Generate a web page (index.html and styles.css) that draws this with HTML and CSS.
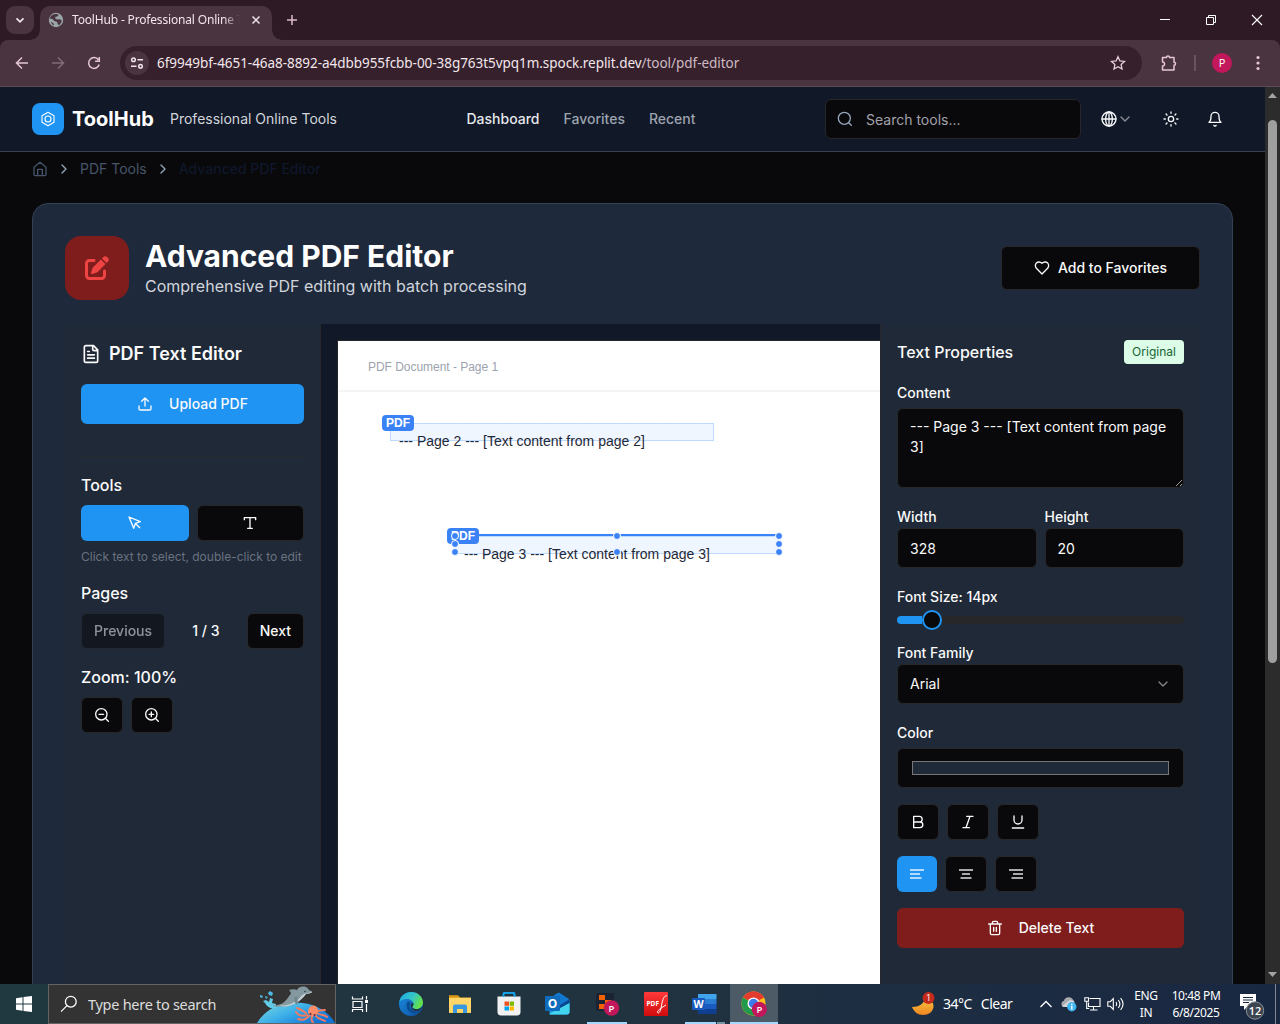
FILE: index.html
```html
<!DOCTYPE html>
<html lang="en">
<head>
<meta charset="utf-8">
<title>ToolHub - Professional Online Tools</title>
<link rel="stylesheet" href="styles.css">
</head>
<body>
<svg class="defs" width="0" height="0">
  <defs>
    <symbol id="chev" viewBox="0 0 24 24"><path d="m6 9 6 6 6-6"/></symbol>
    <symbol id="chev-r" viewBox="0 0 24 24"><path d="m9 18 6-6-6-6"/></symbol>
    <linearGradient id="edge-a" x1="0" y1="0" x2="1" y2="0.4"><stop offset="0" stop-color="#1ba7e6"/><stop offset=".6" stop-color="#35c7c4"/><stop offset="1" stop-color="#63e04b"/></linearGradient>
    <linearGradient id="edge-b" x1="0" y1="0" x2="1" y2="1"><stop offset="0" stop-color="#1b8fe0"/><stop offset="1" stop-color="#0c4da0"/></linearGradient>
    <linearGradient id="sea" x1="0" y1="0" x2="1" y2="0.6"><stop offset="0" stop-color="#7fdcd8"/><stop offset=".5" stop-color="#3fb2ea"/><stop offset="1" stop-color="#1173d6"/></linearGradient>
    <linearGradient id="moon" x1="0" y1="0" x2="0" y2="1"><stop offset="0" stop-color="#f8c840"/><stop offset="1" stop-color="#ef8420"/></linearGradient>
    <linearGradient id="pdfred" x1="0" y1="0" x2="0" y2="1"><stop offset="0" stop-color="#ff3a3a"/><stop offset="1" stop-color="#cf0b0b"/></linearGradient>
  </defs>
</svg>
<div class="screen">
  <div class="tabstrip">
    <div class="tab-search"><svg width="12" height="12" viewBox="0 0 12 12"><path d="M2.500 4.300 6 7.800l3.500-3.500" fill="none" stroke="#f1e4ea" stroke-width="1.700"/></svg></div>
    <div class="tab">
      <svg width="16" height="16" viewBox="0 0 16 16"><circle cx="8" cy="8" r="7.200" fill="#9aa5a8"/><path d="M6.300 2.200c1.700-.6 3.600-.2 4.300.6l-1.200 1.600-1.900.3-.4 1.900 2.200.9 2.800-.3 1.600 1.400c-.2 2-1.200 3.600-2.600 4.600l-1.500-1.300-.4-2-2.900-.9L4.400 7 1.700 6.600C2.300 4.400 4 2.700 6.300 2.200zM3 10l2.300 1.100.8 2.300C4.600 12.900 3.600 11.700 3 10z" fill="#4a3440"/></svg>
      <span class="tab-title">ToolHub - Professional Online Tools</span>
      <svg width="10" height="10" viewBox="0 0 10 10"><path d="m1.500 1.500 7 7m0-7-7 7" stroke="#f1e4ea" stroke-width="1.500"/></svg>
    </div>
    <svg class="new-tab" width="12" height="12" viewBox="0 0 12 12"><path d="M6 1v10M1 6h10" stroke="#dcbccb" stroke-width="1.500"/></svg>
    <div class="win-controls">
      <svg width="46" height="40" viewBox="0 0 46 40"><path d="M18 19.500h10" stroke="#fff"/></svg>
      <svg width="46" height="40" viewBox="0 0 46 40"><path d="M18.500 17.500h7v7h-7zM20.500 17.500v-2h7v7h-2" fill="none" stroke="#fff"/></svg>
      <svg width="46" height="40" viewBox="0 0 46 40"><path d="m18 15 10 10m0-10-10 10" stroke="#fff" stroke-width="1.100"/></svg>
    </div>
  </div>
  <div class="toolbar">
    <svg class="nav" width="14" height="14" viewBox="0 0 14 14"><path d="M13 7H2M7 1.500 1.500 7 7 12.500" fill="none" stroke="#e6c6d4" stroke-width="1.500"/></svg>
    <svg class="nav" width="14" height="14" viewBox="0 0 14 14"><path d="M1 7h11M7 1.500 12.500 7 7 12.500" fill="none" stroke="#836b77" stroke-width="1.500"/></svg>
    <svg class="nav" width="14" height="14" viewBox="0 0 14 14"><path d="M12.200 8.500a5.400 5.400 0 1 1-.8-4.700M12.300 1v4.200H8.100" fill="none" stroke="#e6c6d4" stroke-width="1.500"/></svg>
    <div class="omnibox">
      <div class="site-info"><svg width="14" height="14" viewBox="0 0 14 14" fill="none" stroke="#f1e4ea" stroke-width="1.500"><circle cx="3.500" cy="3.800" r="1.800"/><path d="M7.500 3.800H13M1 10.200h5.500"/><circle cx="10.500" cy="10.200" r="1.800"/></svg></div>
      <span class="url">6f9949bf-4651-46a8-8892-a4dbb955fcbb-00-38g763t5vpq1m.spock.replit.dev<span class="path">/tool/pdf-editor</span></span>
      <svg class="star" width="16" height="16" viewBox="0 0 16 16"><path d="m8 1.700 1.900 4.200 4.600.5-3.400 3.100.9 4.500L8 11.700 4 14l.9-4.500L1.500 6.400l4.600-.5z" fill="none" stroke="#e6cdd8" stroke-width="1.300"/></svg>
    </div>
    <svg class="ext" width="18" height="18" viewBox="0 0 18 18"><path d="M2.500 3.500h4a1.500 1.500 0 0 1 3 0h4.500v4.700a1.500 1.500 0 0 1 0 3.100v4.700H2.500v-4a2 2 0 0 0 0-4z" fill="none" stroke="#e6c6d4" stroke-width="1.500" stroke-linejoin="round"/></svg>
    <div class="tb-sep"></div>
    <div class="avatar">P</div>
    <svg class="dots" width="4" height="16" viewBox="0 0 4 16" fill="#e6c6d4"><circle cx="2" cy="2.500" r="1.600"/><circle cx="2" cy="8" r="1.600"/><circle cx="2" cy="13.500" r="1.600"/></svg>
  </div>

  <div class="viewport">
    <div class="page">
      <header class="site-header">
        <div class="logo"><svg width="16" height="16" viewBox="0 0 16 16" fill="none" stroke="#fff" stroke-width="1.100"><path d="M8 1.300 14 4.700v6.600l-6 3.400-6-3.400V4.700z" stroke-linejoin="round"/><circle cx="8" cy="8" r="3"/></svg></div>
        <span class="brand">ToolHub</span>
        <span class="tagline">Professional Online Tools</span>
        <nav><a class="on">Dashboard</a><a>Favorites</a><a>Recent</a></nav>
        <div class="search"><svg class="ic" width="16" height="16" viewBox="0 0 24 24"><circle cx="11" cy="11" r="9"/><path d="m21.500 21.500-4-4"/></svg><span>Search tools...</span></div>
        <div class="lang"><svg class="ic" width="16" height="16" viewBox="0 0 24 24"><circle cx="12" cy="12" r="10.500"/><ellipse cx="12" cy="12" rx="5" ry="10.500"/><path d="M12 1.500v21M1.500 12h21"/></svg><svg class="ic dim" width="12" height="16" viewBox="3 0 18 24"><path d="m6 9 6 6 6-6"/></svg></div>
        <svg class="ic sun" width="16" height="16" viewBox="0 0 24 24"><circle cx="12" cy="12" r="4"/><path d="M12 1.500v2M12 20.500v2M4.600 4.600 6 6M18 18l1.400 1.400M1.500 12h2M20.500 12h2M6 18l-1.400 1.400M19.400 4.600 18 6"/></svg>
        <svg class="ic" width="16" height="16" viewBox="0 0 24 24"><path d="M6 8a6 6 0 0 1 12 0c0 7 3 9 3 9H3s3-2 3-9M10.300 21.500a1.940 1.940 0 0 0 3.400 0"/></svg>
      </header>
      <div class="crumbs">
        <svg class="ic home" width="16" height="16" viewBox="0 0 24 24"><path d="M3 9.500 12 2l9 7.500V20a2 2 0 0 1-2 2H5a2 2 0 0 1-2-2zM8.500 22V12.500h7V22"/></svg>
        <svg class="ic sep" width="16" height="16"><use href="#chev-r"/></svg>
        <span class="c1">PDF Tools</span>
        <svg class="ic sep" width="16" height="16"><use href="#chev-r"/></svg>
        <span class="c2">Advanced PDF Editor</span>
      </div>
      <main class="card">
        <div class="card-head">
          <div class="tool-icon"><svg width="24" height="24" viewBox="0 0 512 512" fill="#ef4444"><path d="M471.600 21.700c-21.900-21.900-57.300-21.900-79.200 0L362.300 51.700l97.900 97.900 30.100-30.100c21.900-21.900 21.900-57.300 0-79.200L471.600 21.700zm-299.200 220c-6.100 6.100-10.800 13.600-13.500 21.900l-29.600 88.800c-2.900 8.600-.6 18.100 5.800 24.600s15.900 8.700 24.600 5.800l88.800-29.600c8.200-2.700 15.700-7.400 21.900-13.500L437.700 172.300 339.700 74.300 172.400 241.700zM96 64C43 64 0 107 0 160V416c0 53 43 96 96 96H352c53 0 96-43 96-96V320c0-17.700-14.300-32-32-32s-32 14.300-32 32v96c0 17.700-14.300 32-32 32H96c-17.700 0-32-14.300-32-32V160c0-17.700 14.300-32 32-32h96c17.700 0 32-14.300 32-32s-14.300-32-32-32H96z"/></svg></div>
          <div class="titles"><h1>Advanced PDF Editor</h1><p>Comprehensive PDF editing with batch processing</p></div>
          <div class="btn fav"><svg class="ic" width="16" height="16" viewBox="0 0 24 24"><path d="M19 14c1.500-1.500 3-3.200 3-5.500A5.500 5.500 0 0 0 16.500 3c-1.800 0-3 .5-4.500 2-1.500-1.500-2.700-2-4.500-2A5.500 5.500 0 0 0 2 8.500c0 2.300 1.500 4 3 5.500l7 7z"/></svg>Add to Favorites</div>
        </div>
        <div class="editor">
          <aside class="left">
            <h2><svg class="ic" width="20" height="20" viewBox="0 0 24 24"><path d="M15 2H6a2 2 0 0 0-2 2v16a2 2 0 0 0 2 2h12a2 2 0 0 0 2-2V7zM14 2v4a2 2 0 0 0 2 2h4M10 9H8M16 13H8M16 17H8"/></svg>PDF Text Editor</h2>
            <div class="btn primary upload"><svg class="ic" width="16" height="16" viewBox="0 0 24 24"><path d="M21 15v4a2 2 0 0 1-2 2H5a2 2 0 0 1-2-2v-4M17 8l-5-5-5 5M12 3v12"/></svg>Upload PDF</div>
            <div class="rule"></div>
            <h3>Tools</h3>
            <div class="two">
              <div class="btn primary"><svg class="ic" width="16" height="16" viewBox="0 0 24 24"><path d="m3 3 7.070 16.970 2.510-7.390 7.390-2.510zM13 13l6 6"/></svg></div>
              <div class="btn"><svg class="ic" width="16" height="16" viewBox="0 0 24 24"><path d="M3.500 7V4h17v3M8.500 20h7M12 4v16"/></svg></div>
            </div>
            <p class="hint">Click text to select, double-click to edit</p>
            <h3>Pages</h3>
            <div class="pager"><div class="btn off">Previous</div><span>1 / 3</span><div class="btn">Next</div></div>
            <h3>Zoom: 100%</h3>
            <div class="icons">
              <div class="btn sq"><svg class="ic" width="16" height="16" viewBox="0 0 24 24"><circle cx="11" cy="11" r="8.500"/><path d="m21.500 21.500-4.500-4.500M7.500 11h7"/></svg></div>
              <div class="btn sq"><svg class="ic" width="16" height="16" viewBox="0 0 24 24"><circle cx="11" cy="11" r="8.500"/><path d="m21.500 21.500-4.500-4.500M7.500 11h7M11 7.500v7"/></svg></div>
            </div>
          </aside>
          <section class="stage">
            <div class="sheet">
              <div class="sheet-head">PDF Document - Page 1</div>
              <div class="item item-a"><span class="txt">--- Page 2 --- [Text content from page 2]</span><b>PDF</b></div>
              <div class="item item-b"><span class="txt">--- Page 3 --- [Text content from page 3]</span><b>PDF</b>
                <i class="l t"></i><i class="l m"></i><i class="l e"></i><i class="c t"></i><i class="c e"></i><i class="r t"></i><i class="r m"></i><i class="r e"></i>
              </div>
            </div>
          </section>
          <aside class="right">
            <div class="r-head"><h3>Text Properties</h3><span class="badge">Original</span></div>
            <label>Content</label>
            <textarea class="field area">--- Page 3 --- [Text content from page 3]</textarea>
            <div class="wh">
              <div><label>Width</label><div class="field">328</div></div>
              <div><label>Height</label><div class="field">20</div></div>
            </div>
            <label>Font Size: 14px</label>
            <div class="slider"><div class="fill"></div><div class="thumb"></div><div class="track"></div></div>
            <label>Font Family</label>
            <div class="field select">Arial<svg class="ic" width="16" height="16"><use href="#chev"/></svg></div>
            <label class="lc">Color</label>
            <div class="field color"><div></div></div>
            <div class="icons">
              <div class="btn sq"><svg class="ic" width="16" height="16" viewBox="0 0 24 24"><path d="M5.500 12H15a4 4 0 0 1 0 8.500H5.500V3.500H14a4 4 0 0 1 0 8.500"/></svg></div>
              <div class="btn sq"><svg class="ic" width="16" height="16" viewBox="0 0 24 24"><path d="M19.500 3.500H10M14 20.500H4.500M15 3.500 9 20.500"/></svg></div>
              <div class="btn sq"><svg class="ic" width="16" height="16" viewBox="0 0 24 24"><path d="M6 3v6a6 6 0 0 0 12 0V3M3.500 21h17"/></svg></div>
            </div>
            <div class="icons align">
              <div class="btn sq primary"><svg class="bars" width="16" height="16" viewBox="0 0 16 16"><path d="M1 4h14M1 8h10M1 12h11.500"/></svg></div>
              <div class="btn sq"><svg class="bars" width="16" height="16" viewBox="0 0 16 16"><path d="M1 4h14M4 8h8M2.500 12h11"/></svg></div>
              <div class="btn sq"><svg class="bars" width="16" height="16" viewBox="0 0 16 16"><path d="M1 4h14M5 8h10M3.500 12H15"/></svg></div>
            </div>
            <div class="btn danger"><svg class="ic" width="16" height="16" viewBox="0 0 24 24"><path d="M2.500 6h19M19 6v14c0 1-1 2-2 2H7c-1 0-2-1-2-2V6M8 6V4c0-1 1-2 2-2h4c1 0 2 1 2 2v2M10 11v6M14 11v6"/></svg>Delete Text</div>
          </aside>
        </div>
      </main>
    </div>
    <div class="scroll">
      <svg width="15" height="17" viewBox="0 0 15 17"><path d="M3 11h9L7.500 6z" fill="#a3a3a3"/></svg>
      <div class="thumb-v"></div>
      <svg width="15" height="17" viewBox="0 0 15 17"><path d="M3 5h9l-4.500 5z" fill="#a3a3a3"/></svg>
    </div>
  </div>

  <footer class="taskbar">
    <div class="start"><svg width="16" height="16" viewBox="0 0 16 16" fill="#fff"><path d="M0 2.200 6.500 1.300v6.200H0zM7.500 1.100 16 0v7.500H7.500zM0 8.500h6.500v6.200L0 13.800zM7.500 8.500H16V16l-8.500-1.100z"/></svg></div>
    <div class="tsearch">
      <svg width="18" height="18" viewBox="0 0 18 18" fill="none" stroke="#fff" stroke-width="1.300"><circle cx="10.800" cy="6.700" r="5.400"/><path d="M7 10.600 1 16.600"/></svg>
      <span>Type here to search</span>
      <svg class="ocean" width="78" height="38" viewBox="0 0 78 38">
        <path d="M0 38C8 25 22 17 40 17.500S71 26 78 38z" fill="url(#sea)"/>
        <path d="M19 23c-6 1-9-1-11-5l-2-2 3-1 3 2 1-4 3 1-1 4 4 1z" fill="#62cbe8"/><path d="M11 8l2-2 3 2-1 3-3-1zM3 10l3 1-1 2-2-1zM8 11l3 1-2 2z" fill="#4dbce5"/>
        <path d="M14 20c8 1 12-1 16-6 2-3 4-5 4-6l-2-3c3-1 6-1 8 0 1-2 3-3.500 6-3.500 4 0 5 2 6 3.500l3 1.500c0 2-4 2-6 2.500-5 7-14 13-23 12.500-5 0-9 1-12-2z" fill="#84989f"/>
        <path d="M22 20.500c9 .5 17-3 22-9 2-3 5-3 9-4l2-1c0 2-4 2-6 2.500-5 7-14 13-23 12.500z" fill="#c3d1d5"/><path d="M37 13c0 4 2 6 3 7 1-3 1-6 0-9z" fill="#72868e"/><circle cx="48" cy="6.500" r=".8" fill="#2f3b42"/>
        <path d="M50 30c-6 2-9 0-11-3M52 31c-5 5-8 4-11 3M55 31c-1 4 0 6 1 6M59 31c3 4 6 3 9 5M60 28c5 3 7 1 10 4M49 28c-3-2-6-4-9-5M61 26c3-1 5-1 7-1" fill="none" stroke="#f17a5f" stroke-width="2" stroke-linecap="round"/><ellipse cx="56" cy="26" rx="5" ry="5.500" fill="#fa8c69" transform="rotate(18 56 26)"/><circle cx="53.500" cy="29" r="1" fill="#5b2440"/><circle cx="57.500" cy="30" r="1" fill="#5b2440"/>
      </svg>
    </div>
    <div class="slot tv"><svg width="18" height="18" viewBox="0 0 18 18" fill="none" stroke="#fff" stroke-width="1.200"><path d="M1.500 1.500v2.500h10V1.500M2 6.500h9v6H2zM1.500 17v-2.500h10V17M15.500 1v3.500M15.500 9v8"/><path d="M14 5h3v3h-3z" fill="#fff" stroke="none"/></svg></div>
    <div class="slot"><svg width="24" height="24" viewBox="0 0 24 24"><circle cx="12" cy="12" r="12" fill="url(#edge-b)"/><path d="M.3 10C1.500 3.800 6.500 0 12 0c7 0 12 5 12 10.500 0 4-3.200 6.500-6.500 6.500-3 0-4.500-1.500-4-2.500.8-1 1.200-1.700 1-3C14 8.700 11 7 8 7 4 7 1 9 .3 10z" fill="url(#edge-a)"/><path d="M8 10.500c-2 5 2 11 8 11 3 0 5-1.500 6-3-7 3-14-2-10.500-7.500C10.500 9 9 9 8 10.500z" fill="#0b4d93"/><path d="M14.300 11c1 3-2.500 3.500-.3 5.300 3 2 8 .7 9.500-2-.8 2.200-2 3.500-3.500 4.500-5 1.500-10-3-7.500-7.600z" fill="#21353e"/></svg></div>
    <div class="slot"><svg width="22" height="20" viewBox="0 0 22 20"><path d="M0 1.500h9l2 2h11V19H0z" fill="#f4b93c"/><path d="M0 1.500h9l2 2H0z" fill="#d9940c"/><path d="M0 4h22v14.500H0z" fill="#ffd667"/><path d="M4 19v-6.500c0-1.300 1-2 2-2h10c1 0 2 .7 2 2V19h-4v-4H8v4z" fill="#3a96dd"/></svg></div>
    <div class="slot"><svg width="24" height="24" viewBox="0 0 24 24"><path d="M6.500 6V2c0-.8.500-1.200 1.200-1.200h8.600c.7 0 1.200.4 1.200 1.200v4" fill="none" stroke="#1ba4ee" stroke-width="1.700"/><path d="M.5 4.500h23V20c0 2-1.200 3.500-3.500 3.500H4C1.700 23.500.5 22 .5 20z" fill="#f1f1f1"/><path d="M7.500 9.500H12v4.300H7.500z" fill="#f25022"/><path d="M12.700 9.500h4.300v4.300h-4.300z" fill="#7fba00"/><path d="M7.500 14.500H12v4H7.500z" fill="#00a4ef"/><path d="M12.700 14.500h4.300v4h-4.300z" fill="#ffb900"/><path d="M6.500 5V2c0-.8.500-1.200 1.200-1.200h8.600c.7 0 1.200.4 1.200 1.200v3" fill="none" stroke="#1ba4ee" stroke-width="1.500"/></svg></div>
    <div class="slot"><svg width="25" height="24" viewBox="0 0 25 24"><path d="M2 8 13 1l11.500 7v12c0 1.500-1 2.500-2.500 2.500H5z" fill="#1e9ae3"/><path d="M5 6 14 .5l10 6.500-11 8z" fill="#1278cf"/><path d="m12 15 12.500-8v5L15 20z" fill="#0a448f"/><path d="M4 22 24.500 11v9c0 1.500-1 2.500-2.500 2.500H5z" fill="#42d4ef"/><rect y="4" width="15" height="15" rx="1" fill="#0f6cbd"/><text x="7.500" y="15.500" text-anchor="middle" font-family="Open Sans" font-weight="700" font-size="12" fill="#fff">O</text></svg></div>
    <div class="slot run"><svg width="26" height="24" viewBox="0 0 26 24"><rect x="2" y="1" width="18" height="18" rx="2" fill="#1c2333"/><path d="M5 3h6v5H5zM11 8h6v5h-6zM5 12h6v5H5z" fill="#f26207"/><circle cx="17.500" cy="16" r="7.700" fill="#c2185b"/><text x="17.500" y="19.500" text-anchor="middle" font-family="Open Sans" font-weight="600" font-size="9.500" fill="#fff">P</text></svg></div>
    <div class="slot"><svg width="24" height="24" viewBox="0 0 24 24"><rect width="24" height="24" rx="1" fill="url(#pdfred)"/><text x="2.500" y="14" font-family="Open Sans" font-weight="700" font-size="6.500" fill="#fff">PDF</text><path d="M23 4c-2-1-4 2-5 7-1 6-2 10-4 10-2-1 1-4 8-8" fill="none" stroke="#fff"/></svg></div>
    <div class="slot word"><svg width="25" height="22" viewBox="0 0 25 22"><path d="M6 1h18.500v5H6z" fill="#41a5ee"/><path d="M6 6h18.500v5H6z" fill="#2b7cd3"/><path d="M6 11h18.500v5H6z" fill="#185abd"/><path d="M6 16h18.500v5H6z" fill="#103f91"/><rect y="5" width="13" height="12" rx="1" fill="#185abd"/><text x="6.500" y="15" text-anchor="middle" font-family="Open Sans" font-weight="700" font-size="10.500" fill="#fff">W</text></svg></div>
    <div class="slot active"><svg width="26" height="26" viewBox="0 0 26 26"><circle cx="12.500" cy="12.500" r="12" fill="#fbc116"/><path d="M12.500 12.500 2 6.500C5 1.500 9 .5 12.500.5c5 0 8.500 2.500 10.500 6z" fill="#e33b2e"/><path d="M2 6.500C-2 14 2.500 24 12.500 24.500l5-9-5-3z" fill="#229a4b"/><circle cx="12.500" cy="12.500" r="6" fill="#fff"/><circle cx="12.500" cy="12.500" r="4.700" fill="#3b7ded"/><circle cx="18.300" cy="18.300" r="7.600" fill="#c2185b"/><text x="18.300" y="21.800" text-anchor="middle" font-family="Open Sans" font-weight="600" font-size="9.500" fill="#fff">P</text></svg></div>
    <div class="weather"><svg width="25" height="26" viewBox="0 0 25 26"><path d="M1 16c7 0 12-3 13-9 6 1 9 5 8.500 9-.7 5-5 8-10.500 8-5 0-9-3-11-8z" fill="url(#moon)"/><circle cx="17.500" cy="7" r="6" fill="#c42b1c"/><text x="17.500" y="10.300" text-anchor="middle" font-family="Open Sans" font-size="9" fill="#fff">1</text></svg><span>34°C</span><span>Clear</span></div>
    <div class="tray">
      <svg class="caret" width="12" height="8" viewBox="0 0 12 8"><path d="m.5 7 5.500-5.500L11.500 7" fill="none" stroke="#fff" stroke-width="1.300"/></svg>
      <svg width="17" height="16" viewBox="0 0 17 16"><path d="M3.500 11a3.300 3.300 0 0 1 .4-6.300 5 5 0 0 1 9.400-.5c2 .8 2 6.800-1.300 6.800z" fill="#a8aaad"/><path d="m2 10 8-6 4 1v6H4z" fill="#d2d4d6"/><circle cx="11.800" cy="10.800" r="4.700" fill="#40b5ef"/><path d="M11.800 7.700v1.200M11.800 9.800v3.700" stroke="#fff" stroke-width="1.400"/></svg>
      <svg width="17" height="16" viewBox="0 0 17 16" fill="none" stroke="#fff" stroke-width="1.100"><path d="M5.500 2.500h10.500v8H4.500v-4M9.500 10.500v3M6 14h7.500M.8 1.800h3.700v3.500H.8zM2.700 5.300v7.200h2.500"/></svg>
      <svg width="17" height="14" viewBox="0 0 17 14" fill="none" stroke="#fff" stroke-width="1.100"><path d="M.8 4.700h2.500l3-3v10.600l-3-3H.8zM9 5c.8 1.200.8 2.800 0 4M11.300 3c2 2.500 2 5.500 0 8M13.600 1.200c3 3.500 3 8 0 11.600"/></svg>
    </div>
    <div class="two-line lang2"><span>ENG</span><span>IN</span></div>
    <div class="two-line clock"><span>10:48 PM</span><span>6/8/2025</span></div>
    <svg class="notif" width="28" height="28" viewBox="0 0 28 28"><path d="M1 2h16v12H9l-4 4v-4H1z" fill="#fff"/><path d="M4 5.500h10M4 8h10M4 10.500h6" stroke="#1b2940" stroke-width="1.100"/><circle cx="16" cy="18.500" r="8.700" fill="#3b444f" stroke="#8b929b"/><text x="16" y="22.500" text-anchor="middle" font-family="Open Sans" font-weight="600" font-size="11" fill="#fff">12</text></svg>
    <div class="peek"></div>
  </footer>
</div>
</body>
</html>
```
FILE: styles.css
```css
* { box-sizing: border-box; }
body { margin: 0; background: #09090b; font-family: Inter, sans-serif; line-height: 20px; overflow: hidden; }
.defs { display: block; position: absolute; }
svg { display: block; flex: none; }
h1, h2, h3, p { margin: 0; }
.screen { width: 1280px; height: 1024px; display: grid; grid-template-rows: 40px 47px 897px 40px; background: #2e1a25; }
.ic { fill: none; stroke: currentColor; stroke-width: 2; stroke-linecap: round; stroke-linejoin: round; }

/* Browser window frame */
.tabstrip { display: flex; align-items: center; background: #2e1a25; }
.tab-search { width: 28px; height: 28px; margin-left: 6px; border-radius: 9px; background: #4a3440; display: grid; place-items: center; }
.tab { width: 232px; height: 34px; margin: 6px 0 0 6px; padding: 0 11px 6px 8px; border-radius: 10px 10px 0 0; background: #4a3440; display: flex; align-items: center; position: relative; }
.tab::before, .tab::after { content: ""; position: absolute; bottom: 0; width: 10px; height: 10px; }
.tab::before { left: -10px; background: radial-gradient(circle at 0 0, transparent 9.500px, #4a3440 10px); }
.tab::after { right: -10px; background: radial-gradient(circle at 100% 0, transparent 9.500px, #4a3440 10px); }
.tab-title { width: 168px; margin: 0 11px 0 8px; overflow: hidden; white-space: nowrap; font: 12px/16px "Noto Sans", sans-serif; letter-spacing: -0.17px; color: #f1e4ea; mask-image: linear-gradient(90deg, #000 152px, transparent 168px); }
.new-tab { margin-left: 14px; }
.win-controls { display: flex; margin-left: auto; }
.toolbar { display: flex; align-items: center; height: 47px; background: #4a3440; border-bottom: 1px solid #5b4a53; border-radius: 8px 8px 0 0; }
.nav { margin-left: 15px; margin-right: 7px; }
.nav + .nav { margin-left: 15px; }
.omnibox { width: 1022px; height: 34px; margin-left: 12px; border-radius: 17px; background: #35202b; display: flex; align-items: center; }
.site-info { width: 24px; height: 24px; margin-left: 5px; border-radius: 50%; background: #4a3440; display: grid; place-items: center; }
.url { margin-left: 8px; font: 13.500px/20px "Noto Sans", sans-serif; letter-spacing: -0.045px; color: #f3e6ec; white-space: nowrap; }
.path { color: #cfbac4; }
.star { margin: 0 16px 0 auto; }
.ext { margin-left: 18px; }
.tb-sep { width: 2px; height: 16px; margin-left: 16px; background: #6a525e; }
.avatar { width: 20px; height: 20px; margin-left: 16px; border-radius: 50%; background: #c2185b; color: #fff; font: 11px/20px "Open Sans", sans-serif; text-align: center; }
.dots { margin-left: 24px; }

/* Site */
.viewport { display: flex; overflow: hidden; background: #09090b; }
.page { width: 1265px; }
.site-header { height: 65px; padding: 0 42px 0 32px; background: #111827; border-bottom: 1px solid #374151; display: flex; align-items: center; font-size: 14px; color: #f8fafc; }
.logo { width: 32px; height: 32px; border-radius: 8px; background: #2094f3; display: grid; place-items: center; }
.brand { width: 82px; margin-left: 8px; font-size: 20px; line-height: 28px; font-weight: 700; color: #fff; }
.tagline { width: 168px; margin-left: 16px; color: #d1d5db; white-space: nowrap; }
nav { display: flex; gap: 24px; margin-left: 128.500px; font-weight: 500; }
nav a { color: #9ca3af; }
nav a.on { color: #e5e7eb; }
.search { width: 256px; height: 40px; margin-left: auto; padding-left: 11px; border: 1px solid #27272a; border-radius: 6px; background: #09090b; display: flex; align-items: center; gap: 13px; color: #94a3b8; }
.search span { color: #a1a1aa; padding-top: 2px; }
.lang { display: flex; align-items: center; gap: 2px; margin-left: 20px; }
.dim { color: #8b8f98; }
.sun { margin: 0 28px 0 32px; }
.crumbs { display: flex; align-items: center; gap: 8px; height: 20px; margin: 7px 32px 24px; font-size: 14px; font-weight: 400; }
.home { color: #475569; }
.sep { color: #94a3b8; }
.c1 { color: #475569; }
.c2 { color: #0f172a; font-weight: 500; }
.card { height: 1000px; margin: 0 32px; padding: 32px; border: 1px solid #334155; border-radius: 16px; background: #1e293b; }
.card-head { display: flex; align-items: center; height: 64px; margin-bottom: 24px; }
.tool-icon { width: 64px; height: 64px; border-radius: 16px; background: #7f1d1d; display: grid; place-items: center; }
.titles { margin-left: 16px; }
h1 { font-size: 30px; line-height: 36px; font-weight: 700; color: #fff; }
.titles p { font-size: 16px; line-height: 24px; color: #d1d5db; }
.btn { display: flex; align-items: center; justify-content: center; height: 36px; border: 1px solid #27272a; border-radius: 6px; background: #09090b; color: #fafafa; font-size: 14px; font-weight: 500; }
.btn.primary { background: #2094f3; border: 0; }
.fav { width: 199px; height: 44px; margin-left: auto; gap: 8px; }
.editor { display: grid; grid-template-columns: 256px 559px 320px; height: 800px; }
.left, .right { padding: 16px; background: #1f2937; color: #fafafa; }
.left { border-right: 1px solid #27272a; }
h2 { display: flex; align-items: center; gap: 8px; font-size: 18px; line-height: 28px; font-weight: 600; }
.upload { height: 40px; margin-top: 16px; gap: 16px; }
.rule { height: 1px; margin: 32px 0 16px; background: #272a30; }
h3 { font-size: 16px; line-height: 24px; font-weight: 500; }
.two { display: grid; grid-template-columns: 1fr 1fr; gap: 8px; margin-top: 8px; }
.hint { margin: 8px 0 16px; font-size: 12px; line-height: 16px; color: #6b7280; white-space: nowrap; }
.pager { display: flex; justify-content: space-between; align-items: center; margin: 8px 0 16px; font-size: 14px; font-weight: 500; }
.pager .btn { padding: 0 12px; }
.pager .off { opacity: .5; }
.icons { display: flex; gap: 8px; margin-top: 8px; }
.sq { width: 42px; }

/* Document canvas */
.stage { padding: 16px 0 0 16px; background: #111827; overflow: hidden; }
.sheet { position: relative; height: 900px; border: 1px solid #27272a; border-width: 1px 0 0 1px; background-color: #fff; background-image: linear-gradient(#fdfdfd 1px, transparent 1px), linear-gradient(90deg, #fdfdfd 1px, transparent 1px); background-size: 20px 20px; font-family: "Liberation Sans", sans-serif; }
.sheet-head { height: 51px; padding: 18px 30px; border-bottom: 2px solid #f3f4f6; font-size: 12px; line-height: 16px; letter-spacing: -0.03px; color: #9ca3af; }
.item { position: absolute; width: 324px; height: 18px; border: 1px solid #bfdbfe; background: #eff6ff; }
.item-a { left: 52px; top: 82px; }
.item-b { left: 117px; top: 195px; box-shadow: 0 -2px 0 #3b82f6; }
.item .txt { position: absolute; left: 8px; top: 9px; font-size: 14px; line-height: 16px; white-space: nowrap; color: #1f2937; }
.item b { position: absolute; left: -9px; top: -9px; width: 32px; height: 16px; border-radius: 4px; background: #3b82f6; color: #fff; font-size: 12px; line-height: 16px; font-weight: 700; text-align: center; }
.item i { position: absolute; width: 8px; height: 8px; border: 1px solid #fff; border-radius: 50%; background: #3b82f6; }
.l { left: -5px; } .c { left: 157px; } .r { left: 319px; }
.t { top: -5px; } .m { top: 3px; } .e { top: 11px; }

/* Properties */
.right { border-left: 1px solid #27272a; }
.r-head { display: flex; justify-content: space-between; height: 24px; margin-bottom: 19px; }
.badge { width: 60px; border-radius: 4px; background: #dcfce7; color: #166534; font-size: 12px; line-height: 24px; text-align: center; }
label { display: block; height: 20px; font-size: 14px; line-height: 20px; font-weight: 500; }
.field { height: 40px; padding: 0 12px; border: 1px solid #27272a; border-radius: 6px; background: #09090b; color: #fafafa; font: 14px/40px Inter, sans-serif; }
.area { display: block; width: 100%; height: 80px; margin: 5px 0 19px; padding: 8px 12px; line-height: 20px; overflow: hidden; resize: both; }
.wh { display: grid; grid-template-columns: 1fr 1fr; gap: 8px; margin-bottom: 19px; }
.wh .field { margin-top: 1px; }
.slider { display: flex; align-items: center; height: 20px; margin: 3px 0 13px; }
.fill { width: 25px; height: 8px; border-radius: 4px 0 0 4px; background: #2094f3; }
.thumb { width: 20px; height: 20px; border: 2px solid #2094f3; border-radius: 50%; background: #09090b; }
.track { flex: 1; height: 8px; border-radius: 0 4px 4px 0; background: #27272a; }
.select { margin: 1px 0 19px; display: flex; align-items: center; justify-content: space-between; }
.select svg { color: #85858a; }
.lc { margin-bottom: 5px; }
.color { padding: 12px 14px; margin-bottom: 16px; }
.color div { height: 14px; border: 1px solid #777; background: #1f2937; }
.align { margin: 16px 0; }
.align .primary { width: 40px; }
.bars { fill: none; stroke: #fff; stroke-opacity: .65; stroke-width: 2; }
.danger { height: 40px; gap: 16px; border: 0; background: #7f1d1d; }
.scroll { width: 15px; background: #2c2c2c; display: flex; flex-direction: column; }
.scroll .thumb-v { width: 9px; height: 543px; margin: 16px 0 auto 3px; border-radius: 5px; background: #9f9f9f; }

/* Desktop taskbar */
.taskbar { display: flex; align-items: center; background: linear-gradient(90deg, #203840, #20323f 55%, #1e2e42 65%, #192841); color: #fff; font-family: "Noto Sans", sans-serif; }
.start { width: 48px; display: grid; place-items: center; }
.tsearch { width: 288px; height: 40px; border: 1px solid #646464; background: #333; display: flex; align-items: center; padding-left: 11px; }
.tsearch span { width: 140px; margin-left: 10px; font-size: 14.500px; letter-spacing: -0.28px; white-space: nowrap; color: #ddd; }
.ocean { margin-left: auto; }
.slot { width: 49px; height: 40px; display: grid; place-items: center; }
.tv { width: 50px; padding-right: 2px; }
.run { background: linear-gradient(#a6d8ff, #a6d8ff) 50% 100% / 40px 2px no-repeat; }
.word { background: linear-gradient(90deg, #a6d8ff 31px, transparent 31px, transparent 32px, #7894a7 32px) 50% 100% / 40px 2px no-repeat; }
.active { width: 48px; margin-left: 1px; background: linear-gradient(#a6d8ff, #a6d8ff) 0 100% / 100% 2px no-repeat #4c5b65; }
.weather { display: flex; align-items: center; margin-left: 133px; font-size: 14px; white-space: nowrap; }
.weather svg { margin-right: 7px; }
.weather span { letter-spacing: -0.5px; }
.weather span + span { margin-left: 9px; }
.tray { display: flex; align-items: center; gap: 7px; margin-left: auto; }
.caret { margin-right: 2px; }
.tray svg + svg { margin-left: -0.5px; }
.two-line { display: flex; flex-direction: column; align-items: center; font-size: 12px; line-height: 17px; letter-spacing: -0.4px; white-space: nowrap; }
.lang2 { width: 26px; margin-left: 9px; }
.clock { width: 50px; margin-left: 12px; }
.notif { margin: 4px 0 0 18px; }
.peek { width: 1px; height: 40px; margin: 0 4px 0 8px; background: #7f8894; }
```
